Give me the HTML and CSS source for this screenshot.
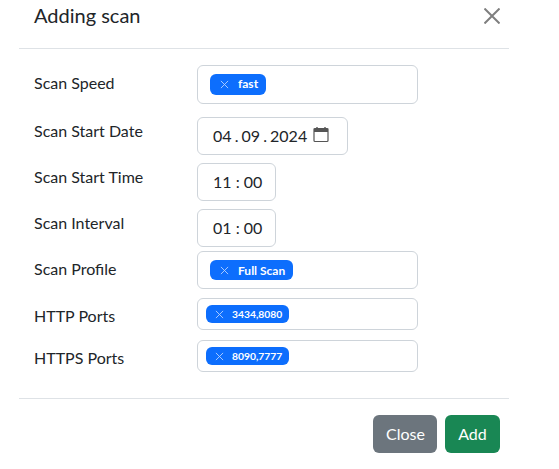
FILE: index.html
```html
<!DOCTYPE html>
<html lang="en">
<head>
    <meta charset="UTF-8">
    <title>Adding scan</title>
    <link rel="stylesheet" href="styles.css">
</head>
<body>
    <div class="modal">
        <div class="modal-header">
            <div class="modal-title">Adding scan</div>
            <svg class="btn-close" width="16" height="16" viewBox="0 0 16 16">
                <path d="M0.5 0.5L15.5 15.5M15.5 0.5L0.5 15.5" stroke="#7f7f7f" stroke-width="2" fill="none"/>
            </svg>
        </div>

        <div class="modal-body">
            <div class="form-row row-speed">
                <label class="form-label label-low">Scan Speed</label>
                <div class="tag-input">
                    <span class="tag">
                        <svg class="tag-x" viewBox="0 0 10 10"><path d="M1 1L9 9M9 1L1 9"/></svg>
                        fast
                    </span>
                </div>
            </div>
            <div class="form-row row-date">
                <label class="form-label">Scan Start Date</label>
                <div class="field field-date">
                    <span class="field-text">04 . 09 . 2024</span>
                    <svg class="calendar" width="16" height="17" viewBox="0 0 16 17">
                        <path d="M1 5.5H15V3.5Q15 2.5 14 2.5H2Q1 2.5 1 3.5V14.5Q1 15.5 2 15.5H14Q15 15.5 15 14.5V5.5" fill="none" stroke="#555" stroke-width="1.2"/>
                        <path d="M1 3H15V5.5H1Z" fill="#555"/>
                        <path d="M4 1V3M12 1V3" stroke="#555" stroke-width="1.4"/>
                    </svg>
                </div>
            </div>
            <div class="form-row row-time">
                <label class="form-label">Scan Start Time</label>
                <div class="field field-time">11 : 00</div>
            </div>
            <div class="form-row row-interval">
                <label class="form-label">Scan Interval</label>
                <div class="field field-time">01 : 00</div>
            </div>
            <div class="form-row row-profile">
                <label class="form-label label-low">Scan Profile</label>
                <div class="tag-input">
                    <span class="tag">
                        <svg class="tag-x" viewBox="0 0 10 10"><path d="M1 1L9 9M9 1L1 9"/></svg>
                        Full Scan
                    </span>
                </div>
            </div>
            <div class="form-row row-http">
                <label class="form-label label-ports">HTTP Ports</label>
                <div class="tag-input tag-input-small">
                    <span class="tag tag-small">
                        <svg class="tag-x" viewBox="0 0 10 10"><path d="M1 1L9 9M9 1L1 9"/></svg>
                        3434,8080
                    </span>
                </div>
            </div>
            <div class="form-row">
                <label class="form-label label-ports">HTTPS Ports</label>
                <div class="tag-input tag-input-small">
                    <span class="tag tag-small">
                        <svg class="tag-x" viewBox="0 0 10 10"><path d="M1 1L9 9M9 1L1 9"/></svg>
                        8090,7777
                    </span>
                </div>
            </div>
        </div>

        <div class="modal-footer">
            <button class="btn btn-close-modal">Close</button>
            <button class="btn btn-add">Add</button>
        </div>
    </div>
</body>
</html>
```

FILE: styles.css
```css
body {
    margin: 0;
    background-color: #fff;
    font-family: Lato, "Liberation Sans", sans-serif;
    color: #212529;
}

.modal {
    width: 490px;
    margin-left: 19px;
}

.modal-header {
    display: flex;
    justify-content: space-between;
    align-items: center;
    height: 49px;
    box-sizing: border-box;
    padding: 0 9px 16px 15px;
    border-bottom: 1px solid #dee2e6;
}

.modal-title {
    font-size: 20px;
    line-height: 30px;
    padding-bottom: 2px;
}

.modal-body {
    padding: 16px 15px 26px 15px;
}

.form-row {
    display: flex;
    align-items: flex-start;
}

.row-speed {
    margin-bottom: 13px;
}

.row-date,
.row-time {
    margin-bottom: 8px;
}

.row-interval {
    margin-bottom: 4px;
}

.row-profile {
    margin-bottom: 9px;
}

.row-http {
    margin-bottom: 10px;
}

.form-label {
    width: 163px;
    flex-shrink: 0;
    font-size: 16px;
    line-height: 24px;
    padding-top: 2px;
}

.label-low {
    padding-top: 6px;
}

.label-ports {
    padding-top: 6px;
}

.tag-input {
    box-sizing: border-box;
    display: flex;
    align-items: flex-start;
    width: 221px;
    height: 39px;
    padding: 8px 12px;
    border: 1px solid #ced4da;
    border-radius: 6px;
}

.row-profile .tag-input {
    height: 38px;
}

.tag-input-small {
    height: 32px;
    padding: 6px 8px;
}

.tag {
    box-sizing: border-box;
    display: inline-flex;
    align-items: center;
    height: 21px;
    padding: 0 8px 0 10px;
    border-radius: 6px;
    background-color: #0d6efd;
    color: #fff;
    font-size: 12px;
    font-weight: 700;
}

.row-speed .tag {
    padding-bottom: 2px;
}

.row-profile .tag {
    height: 20px;
}

.tag-small {
    height: 18px;
    padding: 0 7px 0 9px;
    font-size: 10.3px;
}

.tag-x {
    width: 9px;
    height: 9px;
    margin-right: 9px;
    stroke: #b5d2ff;
    stroke-width: 1;
    fill: none;
}

.row-speed .tag-x {
    margin-top: 2px;
}

.tag-small .tag-x {
    margin-right: 8px;
}

.field {
    box-sizing: border-box;
    display: flex;
    align-items: center;
    height: 38px;
    padding: 0 15px 2px 15px;
    border: 1px solid #ced4da;
    border-radius: 6px;
    font-size: 16px;
    white-space: nowrap;
}

.field-text {
    word-spacing: -1px;
}

.field-date {
    width: 151px;
    gap: 6px;
}

.field-time {
    width: 79px;
}

.calendar {
    margin-top: -2px;
}

.modal-footer {
    display: flex;
    justify-content: flex-end;
    gap: 8px;
    padding: 16px 9px 0 0;
    border-top: 1px solid #dee2e6;
}

.btn {
    height: 38px;
    padding: 0 13px 2px 13px;
    border: none;
    border-radius: 6px;
    color: #fff;
    font-family: inherit;
    font-size: 16px;
}

.btn-close-modal {
    width: 64px;
    background-color: #6c757d;
}

.btn-add {
    width: 55px;
    background-color: #198754;
}
```
